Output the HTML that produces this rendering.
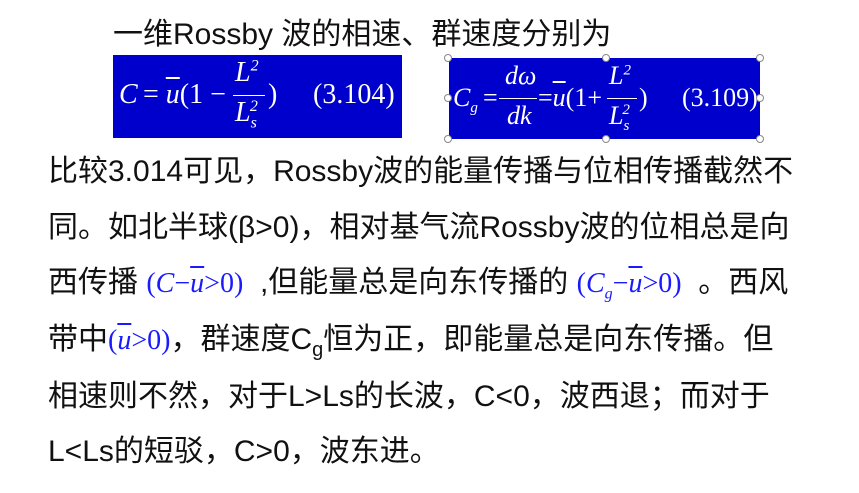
<!DOCTYPE html>
<html><head><meta charset="utf-8"><style>
body{margin:0;width:859px;height:493px;background:#fff;overflow:hidden;position:relative;font-family:"Liberation Sans","Noto Sans CJK SC",sans-serif;color:#111;}
.l{position:absolute;left:48px;font-size:30px;line-height:36px;white-space:nowrap;}
.m{font-family:"Liberation Serif",serif;color:#1a1aff;font-size:28px;}
.m i{font-style:italic}
.box{position:absolute;background:#0000cc;color:#fff;font-family:"Liberation Serif",serif;font-size:28px;}
.box span{position:absolute;white-space:nowrap}
.h{position:absolute;width:6px;height:6px;border:1px solid #888;border-radius:50%;background:#fff;}
.ob{text-decoration:overline}
</style></head><body>
<div class="l" style="left:113px;top:17px;">一维Rossby 波的相速、群速度分别为</div>
<div class="box" style="left:113px;top:55px;width:289px;height:83px;">
<span style="left:6px;top:24px;font-style:italic">C</span>
<span style="left:30px;top:24px">= <i class="ob">u</i>(1 &minus;</span>
<span style="left:122px;top:2px;font-style:italic">L<sup style="font-size:16px">2</sup></span>
<div style="position:absolute;left:120px;top:40px;width:32px;height:1px;background:#fff"></div>
<span style="left:122px;top:42px;font-style:italic">L<sub style="font-size:16px">s</sub><sup style="font-size:16px;margin-left:-7px">2</sup></span>
<span style="left:155px;top:24px">)</span>
<span style="left:200px;top:24px">(3.104)</span>
</div>
<div class="box" style="left:449px;top:58px;width:311px;height:81px;font-size:26px">
<span style="left:4px;top:25px;font-style:italic">C<sub style="font-size:15px">g</sub></span>
<span style="left:34px;top:25px">=</span>
<span style="left:56px;top:3px;font-style:italic">dω</span>
<div style="position:absolute;left:50px;top:40px;width:38px;height:1px;background:#fff"></div>
<span style="left:58px;top:43px;font-style:italic">dk</span>
<span style="left:89px;top:25px">=<i class="ob">u</i>(1+</span>
<span style="left:160px;top:3px;font-style:italic">L<sup style="font-size:15px">2</sup></span>
<div style="position:absolute;left:158px;top:40px;width:30px;height:1px;background:#fff"></div>
<span style="left:160px;top:43px;font-style:italic">L<sub style="font-size:15px">s</sub><sup style="font-size:15px;margin-left:-7px">2</sup></span>
<span style="left:190px;top:25px">)</span>
<span style="left:233px;top:25px">(3.109)</span>
</div>
<div class="h" style="left:444px;top:54px"></div><div class="h" style="left:602px;top:54px"></div><div class="h" style="left:756px;top:54px"></div>
<div class="h" style="left:444px;top:94px"></div><div class="h" style="left:756px;top:94px"></div>
<div class="h" style="left:444px;top:135px"></div><div class="h" style="left:602px;top:135px"></div><div class="h" style="left:756px;top:135px"></div>
<div class="l" style="top:154px;">比较3.014可见，Rossby波的能量传播与位相传播截然不</div>
<div class="l" style="top:210px;">同。如北半球(β&gt;0)，相对基气流Rossby波的位相总是向</div>
<div class="l" style="top:265px;">西传播 <span class="m">(<i>C</i>&minus;<i class="ob">u</i>&gt;0)</span> &nbsp;,但能量总是向东传播的 <span class="m">(<i>C<sub style="font-size:16px">g</sub></i>&minus;<i class="ob">u</i>&gt;0)</span> &nbsp;。西风</div>
<div class="l" style="top:322px;">带中<span class="m">(<i class="ob">u</i>&gt;0)</span>，群速度C<sub style="font-size:20px">g</sub>恒为正，即能量总是向东传播。但</div>
<div class="l" style="top:379px;">相速则不然，对于L&gt;Ls的长波，C&lt;0，波西退；而对于</div>
<div class="l" style="top:434px;">L&lt;Ls的短驳，C&gt;0，波东进。</div>
</body></html>
